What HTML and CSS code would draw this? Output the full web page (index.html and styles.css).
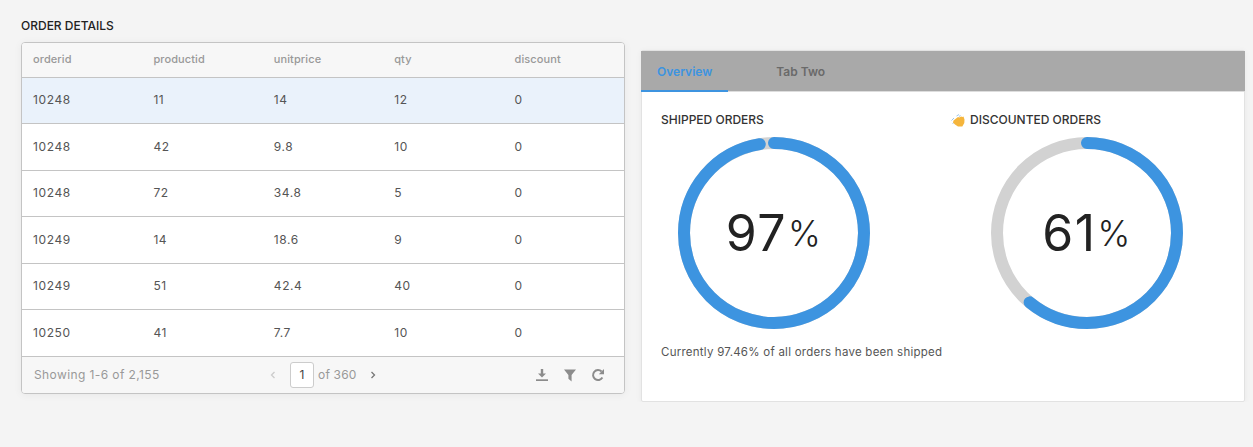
FILE: index.html
```html
<!DOCTYPE html>
<html lang="en">
<head>
  <meta charset="UTF-8" />
  <meta name="viewport" content="width=device-width, initial-scale=1.0" />
  <title>Order details</title>
  <link rel="stylesheet" href="styles.css">
</head>
<body>
  <main class="page">
    <section class="left">
      <h2 class="title">ORDER DETAILS</h2>
      <div class="table-card">
        <div class="row head">
          <div>orderid</div><div>productid</div><div>unitprice</div><div>qty</div><div>discount</div>
        </div>
        <div class="row selected">
          <div>10248</div><div>11</div><div>14</div><div>12</div><div>0</div>
        </div>
        <div class="row">
          <div>10248</div><div>42</div><div>9.8</div><div>10</div><div>0</div>
        </div>
        <div class="row">
          <div>10248</div><div>72</div><div>34.8</div><div>5</div><div>0</div>
        </div>
        <div class="row">
          <div>10249</div><div>14</div><div>18.6</div><div>9</div><div>0</div>
        </div>
        <div class="row">
          <div>10249</div><div>51</div><div>42.4</div><div>40</div><div>0</div>
        </div>
        <div class="row">
          <div>10250</div><div>41</div><div>7.7</div><div>10</div><div>0</div>
        </div>
        <div class="pager">
          <span class="showing">Showing 1-6 of 2,155</span>
          <div class="pages">
            <svg class="chev off" width="6" height="8" viewBox="0 0 6 8"><path d="M4.500 1 1.500 4l3 3" /></svg>
            <span class="page-box">1</span>
            <span class="page-of">of 360</span>
            <svg class="chev" width="6" height="8" viewBox="0 0 6 8"><path d="M1.500 1l3 3-3 3" /></svg>
          </div>
          <div class="tools">
            <svg width="14" height="14" viewBox="0 0 14 14"><path d="M5.800 1h2.400v4.500H11L7 9.600 3 5.500h2.800z" /><rect x="1" y="11.300" width="12" height="1.700" /></svg>
            <svg width="14" height="14" viewBox="0 0 14 14"><path d="M1 1.500h12L8.600 7v6.500L5.400 10.800V7z" /></svg>
            <svg width="14" height="14" viewBox="0 0 14 14"><path class="arc" d="M11.400 9.500A5 5 0 1 1 10.600 3.500" /><path d="M13 1v5.200H7.800z" /></svg>
          </div>
        </div>
      </div>
    </section>

    <section class="right">
      <div class="tabs">
        <div class="tab active">Overview</div>
        <div class="tab">Tab Two</div>
      </div>
      <div class="charts">
        <div class="chart">
          <h3 class="chart-title">SHIPPED ORDERS</h3>
          <div class="gauge">
            <svg width="194" height="194" viewBox="0 0 194 194">
              <circle class="track" cx="97" cy="97" r="90" />
              <circle class="fill" cx="97" cy="97" r="90" pathLength="100" stroke-dasharray="97.46 100" transform="rotate(-90 97 97)" />
            </svg>
            <div class="value">97<span class="pct">%</span></div>
          </div>
          <p class="note">Currently 97.46% of all orders have been shipped</p>
        </div>
        <div class="chart">
          <h3 class="chart-title">
            <svg class="wave" width="14" height="13" viewBox="0 0 14 13">
              <path class="wave-air" d="M.5 6.500 3 4M1.500 9.500 3 8.500M5.500 2 8 .5M8 2.500 9.500 1.500" />
              <path class="wave-hand" d="M2.500 6.500 7 3l1.300.5L10 2.500l1.500.5 1-.5 1 3-.2 3.500-2 3.500H7L4 10.500 2 8.500z" />
            </svg>
            <span>DISCOUNTED ORDERS</span>
          </h3>
          <div class="gauge second">
            <svg width="194" height="194" viewBox="0 0 194 194">
              <circle class="track" cx="97" cy="97" r="90" />
              <circle class="fill" cx="97" cy="97" r="90" pathLength="100" stroke-dasharray="61 100" transform="rotate(-90 97 97)" />
            </svg>
            <div class="value">61<span class="pct">%</span></div>
          </div>
        </div>
      </div>
    </section>
  </main>
</body>
</html>
```

FILE: styles.css
```css
* {
  box-sizing: border-box;
}
body {
  margin: 0;
  background: #f4f4f4;
  font-family: Inter, "Liberation Sans", sans-serif;
  color: #444;
}
.page {
  display: flex;
  gap: 16px;
  padding: 19px 8px 0 21px;
}
.left,
.right {
  width: 604px;
}
.title {
  margin: 0 0 9px;
  font-size: 12px;
  line-height: 14px;
  font-weight: 500;
  color: #222;
}
.table-card {
  background: #fff;
  border: 1px solid #c4c4c4;
  border-radius: 4px;
  box-shadow: 0 1px 8px rgba(0, 0, 0, 0.05);
  overflow: hidden;
}
.row {
  display: grid;
  grid-template-columns: repeat(5, 120.4px);
  align-items: center;
  height: 46.5px;
  padding-left: 11px;
  padding-bottom: 1px;
  border-bottom: 1px solid #c4c4c4;
  font-size: 12px;
  letter-spacing: 0.6px;
  color: #555;
}
.row.head {
  height: 34.5px;
  background: #f7f7f7;
  font-size: 11px;
  font-weight: 500;
  letter-spacing: 0.1px;
  color: #999;
}
.row.selected {
  background: #eaf2fb;
}
.pager {
  display: flex;
  align-items: center;
  height: 36.500px;
  background: #f7f7f7;
  padding: 0 19px 0 12px;
  font-size: 12px;
  color: #999;
}
.showing {
  width: 236px;
  letter-spacing: 0.4px;
}
.pages {
  display: flex;
  align-items: center;
  gap: 4px;
}
.chev {
  fill: none;
  stroke: #777;
  stroke-width: 1.3;
}
.chev.off {
  stroke: #ccc;
  margin-right: 10px;
}
.page-box {
  width: 24px;
  height: 26px;
  background: #fff;
  border: 1px solid #ccc;
  border-radius: 3px;
  color: #444;
  text-align: center;
  line-height: 24px;
}
.page-of {
  margin-right: 9px;
  letter-spacing: 0.2px;
}
.tools {
  display: flex;
  gap: 14px;
  margin-left: auto;
}
.tools svg {
  fill: #8c8c8c;
}
.tools .arc {
  fill: none;
  stroke: #8c8c8c;
  stroke-width: 2;
}
.right {
  margin-top: 31px;
  height: 352px;
  background: #fff;
  border: 1px solid #e2e2e2;
  box-shadow: 0 1px 6px rgba(0, 0, 0, 0.05);
  border-radius: 2px;
}
.tabs {
  display: flex;
  gap: 32px;
  height: 41px;
  margin: 0 -1px;
  background: #a9a9a9;
  border-bottom: 1px solid #ddd;
}
.tab {
  padding: 14px 16px 0;
  font-size: 12px;
  line-height: 14px;
  font-weight: 600;
  color: #6a6a6a;
}
.tab.active {
  color: #3d94e0;
  border-bottom: 2px solid #3d94e0;
  height: 41px;
}
.charts {
  display: flex;
  padding: 21px 0 0 19px;
}
.chart {
  flex: none;
  width: 290px;
}
.chart-title {
  display: flex;
  align-items: center;
  gap: 5px;
  margin: 0 0 9px;
  font-size: 12px;
  line-height: 14px;
  font-weight: 500;
  color: #333;
}
.wave-hand {
  fill: #f5b53c;
}
.wave-air {
  fill: none;
  stroke: #9fc6e8;
  stroke-width: 1;
}
.gauge {
  position: relative;
  width: 194px;
  height: 194px;
  margin-left: 16px;
}
.gauge.second {
  margin-left: 39px;
}
.track,
.fill {
  fill: none;
  stroke-width: 12;
}
.track {
  stroke: #d2d2d2;
}
.fill {
  stroke: #3d94e0;
  stroke-linecap: round;
}
.value {
  position: absolute;
  inset: 0;
  display: flex;
  align-items: center;
  justify-content: center;
  font-size: 50px;
  letter-spacing: 1.5px;
  color: #222;
}
.pct {
  font-size: 35px;
  font-weight: 300;
  margin-left: 1px;
}
.note {
  margin: 15px 0 0;
  font-size: 11.500px;
  line-height: 14px;
  letter-spacing: 0.25px;
  white-space: nowrap;
  color: #555;
}
```
